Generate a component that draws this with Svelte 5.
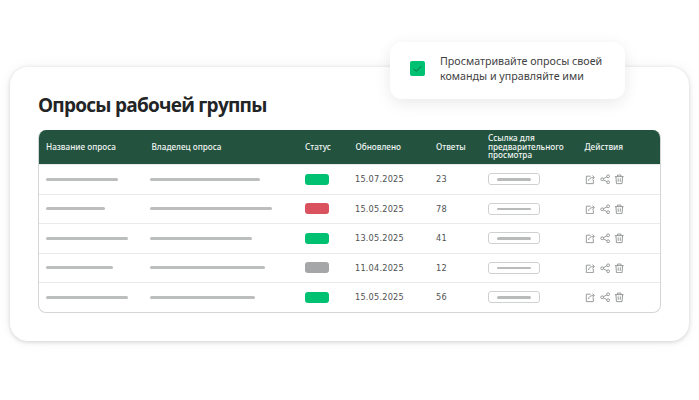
<script>
  const rows = [
    { name: 72, owner: 110, status: 'green', date: '15.07.2025', count: 23 },
    { name: 59, owner: 122, status: 'red', date: '15.05.2025', count: 78 },
    { name: 82, owner: 102, status: 'green', date: '13.05.2025', count: 41 },
    { name: 67, owner: 115, status: 'grey', date: '11.04.2025', count: 12 },
    { name: 82, owner: 105, status: 'green', date: '15.05.2025', count: 56 }
  ];
</script>

<main class="stage">
  <section class="card">
    <h1>Опросы рабочей группы</h1>
    <div class="table">
      <div class="row head">
        <span>Название опроса</span>
        <span>Владелец опроса</span>
        <span>Статус</span>
        <span>Обновлено</span>
        <span>Ответы</span>
        <span class="long">Ссылка для предварительного просмотра</span>
        <span>Действия</span>
      </div>
      {#each rows as row}
        <div class="row">
          <div><i class="bar" style="width: {row.name}px"></i></div>
          <div><i class="bar" style="width: {row.owner}px"></i></div>
          <div><b class="status {row.status}"></b></div>
          <div class="num">{row.date}</div>
          <div class="num">{row.count}</div>
          <div><span class="link"><i></i></span></div>
          <div class="actions">
            <svg viewBox="0 0 12 12"><path d="M6.500 2.500H1.500V11H9.500V6.500M4 8C4.300 5.500 6 4 10 4M8.500 1.800 10.800 4 8.500 6.200" /></svg>
            <svg viewBox="0 0 12 12"><circle cx="2.500" cy="6" r="1.600" /><circle cx="9.300" cy="2.600" r="1.600" /><circle cx="9.300" cy="9.400" r="1.600" /><path d="M3.900 5.300 7.900 3.300M3.900 6.700 7.900 8.700" /></svg>
            <svg viewBox="0 0 12 12"><path d="M1 3H11M4 3V1.200H8V3M2.200 3 2.800 11H9.200L9.800 3M4.800 5V9M7.200 5V9" /></svg>
          </div>
        </div>
      {/each}
    </div>
  </section>

  <aside class="note">
    <span class="check">
      <svg viewBox="0 0 16 16"><path d="M4 8.300 6.800 11 12 5.500" /></svg>
    </span>
    <p>Просматривайте опросы своей команды и управляйте ими</p>
  </aside>
</main>

<style>
  :global(body) {
    background: #fff;
  }

  .stage {
    position: relative;
    width: 699px;
    height: 400px;
    padding: 67px 10px 0;
    box-sizing: border-box;
    overflow: hidden;
    font-family: "Noto Sans", sans-serif;
  }

  .card {
    height: 274px;
    box-sizing: border-box;
    padding: 25px 28px 0;
    border-radius: 18px;
    background: #fff;
    box-shadow: 0 1px 4px rgba(0, 0, 0, 0.16), 0 0 14px rgba(0, 0, 0, 0.05);
  }

  h1 {
    margin: 0 0 12px;
    font-family: "Open Sans", sans-serif;
    font-size: 19px;
    line-height: 26px;
    font-weight: 700;
    letter-spacing: -0.75px;
    color: #222426;
  }

  .table {
    width: 623px;
    border: 1px solid #d4d6d6;
    border-top: 0;
    border-radius: 8px;
    box-sizing: border-box;
    overflow: hidden;
  }

  .row {
    display: grid;
    grid-template-columns: 104px 155px 50px 81px 52px 97px 1fr;
    align-items: center;
    height: 29.500px;
    padding-left: 7px;
    border-top: 1px solid #e9ebea;
    box-sizing: border-box;
  }

  .row > div {
    display: flex;
    align-items: center;
  }

  .head {
    grid-template-columns: 105.500px 153.500px 50.500px 80.500px 52px 96.500px 1fr;
    height: 34px;
    margin: 0 -1px;
    border: 0;
    background: #23533f;
    color: #f1f5f3;
    font-size: 8.200px;
    font-weight: 500;
    line-height: 8.600px;
    padding-left: 8px;
  }

  .long {
    width: 82px;
  }

  .bar {
    display: block;
    height: 3px;
    border-radius: 2px;
    background: #bcbdbd;
  }

  .status {
    display: block;
    width: 24px;
    height: 11px;
    border-radius: 3px;
  }

  .green {
    background: #00c072;
  }

  .red {
    background: #d9525e;
  }

  .grey {
    background: #a5a6a8;
  }

  .num {
    font-family: "DejaVu Sans", sans-serif;
    font-size: 8.200px;
    letter-spacing: 0.2px;
    color: #505253;
  }

  .link {
    display: flex;
    align-items: center;
    justify-content: center;
    width: 52px;
    height: 12px;
    border: 1px solid #cfd1d1;
    border-radius: 3px;
    box-sizing: border-box;
  }

  .link i {
    display: block;
    width: 34px;
    height: 2.500px;
    border-radius: 2px;
    background: #b9baba;
  }

  .actions {
    gap: 4px;
  }

  .actions svg {
    width: 10.500px;
    height: 10.500px;
    fill: none;
    stroke: #8c8e8e;
    stroke-width: 1;
  }

  .note {
    position: absolute;
    left: 390px;
    top: 42px;
    display: flex;
    align-items: center;
    gap: 15px;
    width: 235px;
    height: 57px;
    padding: 0 0 4px 20px;
    box-sizing: border-box;
    border-radius: 12px;
    background: #fff;
    box-shadow: 0 4px 16px rgba(0, 0, 0, 0.09);
  }

  .check {
    display: flex;
    width: 15px;
    height: 15px;
    border-radius: 2px;
    background: #00c072;
  }

  .check svg {
    width: 15px;
    height: 15px;
    fill: none;
    stroke: #12684a;
    stroke-width: 1;
  }

  .note p {
    margin: 0;
    width: 170px;
    font-size: 10.700px;
    line-height: 15px;
    color: #3f4244;
  }
</style>
